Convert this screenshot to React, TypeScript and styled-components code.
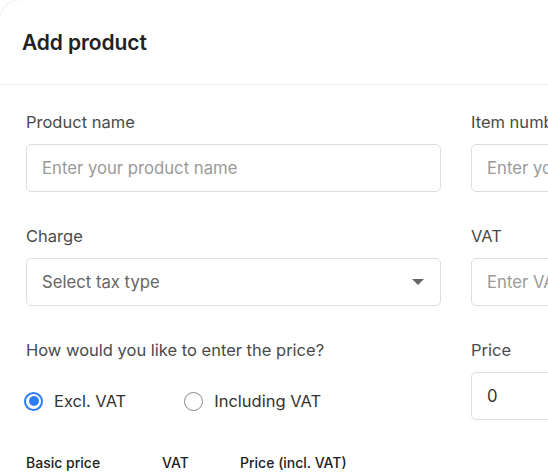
import React from "react";
import styled, { createGlobalStyle } from "styled-components";

const Global = createGlobalStyle`
  html, body { margin: 0; padding: 0; background: #ffffff; overflow: hidden; }
  body { font-family: Inter, "Noto Sans", sans-serif; color: #222; }
  * { box-sizing: border-box; }
`;

const Modal = styled.div`
  width: 960px;
  height: 473px;
  background: #fff;
  border-top-left-radius: 22px;
  box-shadow: -1px -1px 2px rgba(0,0,0,0.06);
  display: flex;
  flex-direction: column;
`;

const Header = styled.div`
  height: 85px;
  padding: 0 22px;
  display: flex;
  align-items: center;
  border-bottom: 1px solid #ebebeb;
`;

const Title = styled.h1`
  margin: 0;
  font-size: 21px;
  font-weight: 600;
  color: #222;
  letter-spacing: -0.1px;
`;

const Body = styled.div`
  padding: 26px 26px 0 26px;
  display: grid;
  grid-template-columns: 415px 415px;
  column-gap: 30px;
  row-gap: 33px;
`;

const Field = styled.div`
  display: flex;
  flex-direction: column;
`;

const Label = styled.label`
  font-size: 16.5px;
  color: #4a4a4a;
  line-height: 22px;
  margin-bottom: 11px;
`;

const InputBox = styled.div`
  height: 48px;
  border: 1px solid #dedede;
  border-radius: 5px;
  padding: 0 15px;
  display: flex;
  align-items: center;
  justify-content: space-between;
  font-size: 16.7px;
`;

const Placeholder = styled.span<{ $dark?: boolean; $mid?: boolean }>`
  color: ${(p) => (p.$dark ? "#333" : p.$mid ? "#666" : "#9a9a9a")};
`;

const Caret = styled.span`
  width: 0;
  height: 0;
  border-left: 6px solid transparent;
  border-right: 6px solid transparent;
  border-top: 6px solid #666;
  margin-right: 1px;
`;

const RadioRow = styled.div`
  display: flex;
  align-items: center;
  gap: 58px;
  margin-left: -2px;
  margin-top: 18px;
  height: 22px;
`;

const RadioItem = styled.div`
  display: flex;
  align-items: center;
  gap: 11px;
  font-size: 16.5px;
  color: #333;
`;

const RadioCircle = styled.span<{ $checked?: boolean }>`
  width: 19px;
  height: 19px;
  border-radius: 50%;
  border: ${(p) => (p.$checked ? "2px solid #2b7cf6" : "1.5px solid #8a8a8a")};
  display: flex;
  align-items: center;
  justify-content: center;
  &::after {
    content: "";
    width: 10px;
    height: 10px;
    border-radius: 50%;
    background: ${(p) => (p.$checked ? "#2b7cf6" : "transparent")};
  }
`;

const PriceHead = styled.div`
  display: flex;
  margin-top: 42px;
  font-size: 14px;
  font-weight: 500;
  color: #222;
`;

const HeadCell = styled.span<{ $w: number }>`
  width: ${(p) => p.$w}px;
`;

const QuestionBlock = styled.div`
  display: flex;
  flex-direction: column;
`;

export default function App() {
  return (
    <>
      <Global />
      <Modal>
        <Header>
          <Title>Add product</Title>
        </Header>
        <Body>
          <Field>
            <Label>Product name</Label>
            <InputBox>
              <Placeholder>Enter your product name</Placeholder>
            </InputBox>
          </Field>
          <Field>
            <Label>Item number</Label>
            <InputBox>
              <Placeholder>Enter your item number</Placeholder>
            </InputBox>
          </Field>
          <Field>
            <Label>Charge</Label>
            <InputBox>
              <Placeholder $mid>Select tax type</Placeholder>
              <Caret />
            </InputBox>
          </Field>
          <Field>
            <Label>VAT</Label>
            <InputBox>
              <Placeholder>Enter VAT</Placeholder>
            </InputBox>
          </Field>
          <QuestionBlock>
            <Label>How would you like to enter the price?</Label>
            <RadioRow>
              <RadioItem>
                <RadioCircle $checked />
                Excl. VAT
              </RadioItem>
              <RadioItem>
                <RadioCircle />
                Including VAT
              </RadioItem>
            </RadioRow>
            <PriceHead>
              <HeadCell $w={136}>Basic price</HeadCell>
              <HeadCell $w={78}>VAT</HeadCell>
              <HeadCell $w={160}>Price (incl. VAT)</HeadCell>
            </PriceHead>
          </QuestionBlock>
          <Field>
            <Label>Price</Label>
            <InputBox>
              <Placeholder $dark>0</Placeholder>
            </InputBox>
          </Field>
        </Body>
      </Modal>
    </>
  );
}
